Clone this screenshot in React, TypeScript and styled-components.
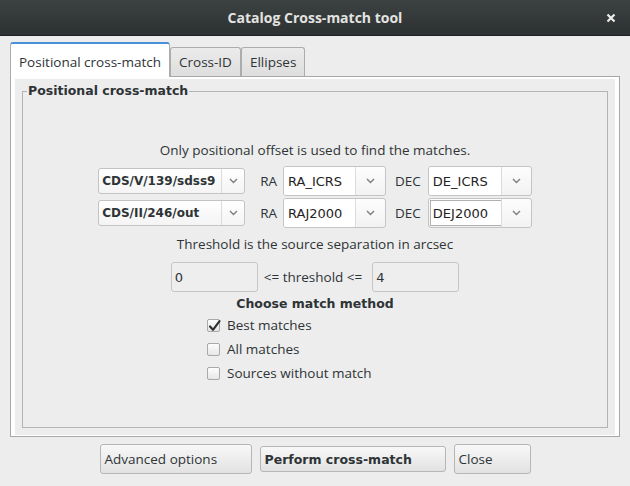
import React from "react";
import styled, { createGlobalStyle, css } from "styled-components";

const UI = `"Open Sans", "Noto Sans", sans-serif`;
const DJ = `"DejaVu Sans", "Liberation Sans", sans-serif`;

const GlobalStyle = createGlobalStyle`
  html, body { margin: 0; padding: 0; background: #ededed; }
  body { font-family: ${UI}; color: #2e3436; }
  *, *::before, *::after { box-sizing: border-box; }
`;

const Window = styled.div`
  width: 630px;
  height: 486px;
  display: flex;
  flex-direction: column;
  background: #ededed;
  overflow: hidden;
`;

const TitleBar = styled.header`
  height: 36px;
  flex: none;
  display: grid;
  grid-template-columns: 1fr auto 1fr;
  align-items: center;
  background: linear-gradient(#3c4141, #2d3131);
  border-bottom: 1px solid #1e2121;
`;

const Title = styled.div`
  grid-column: 2;
  font-family: ${UI};
  font-weight: 700;
  font-size: 14px;
  color: #e3e3e1;
  padding-bottom: 1px;
`;

const CloseIcon = styled.div`
  grid-column: 3;
  justify-self: end;
  margin-right: 14px;
  display: flex;
  align-items: center;
`;

const Body = styled.div`
  flex: 1;
  display: flex;
  flex-direction: column;
  padding: 6px 10px 0;
`;

const TabStrip = styled.div`
  height: 34px;
  display: flex;
  align-items: flex-end;
`;

const Tab = styled.div<{ $active?: boolean }>`
  display: flex;
  align-items: center;
  padding: 0 8px;
  font-family: ${UI};
  font-size: 13.5px;
  color: #2e3436;
  white-space: nowrap;
  border: 1px solid #acacac;
  border-bottom: none;
  border-radius: 3px 3px 0 0;
  ${(p) =>
    p.$active
      ? css`
          height: 35px;
          margin-bottom: -1px;
          padding-top: 3px;
          background: #ffffff;
          border-top: 2px solid #4a90d9;
          position: relative;
          z-index: 1;
        `
      : css`
          height: 29px;
          background: linear-gradient(#ebebeb, #dedede);
        `}
`;

const Panel = styled.div`
  height: 361px;
  flex: none;
  border: 1px solid #a8a8a8;
  background: #ffffff;
  padding: 2px 4px 1px;
  display: flex;
`;

const PanelInner = styled.div`
  flex: 1;
  display: flex;
  background: #ededed;
  padding: 4px 7px 7px 7px;
`;

const Group = styled.fieldset`
  flex: 1;
  margin: 0;
  padding: 0;
  min-width: 0;
  border: 1px solid #b4b4b4;
  display: flex;
  flex-direction: column;
  align-items: center;
`;

const Legend = styled.legend`
  font-family: ${DJ};
  font-weight: 700;
  font-size: 12.5px;
  line-height: 16px;
  color: #2e3436;
  margin-left: 4px;
  padding: 0 1px;
`;

const Caption = styled.div<{ $mt: number; $bold?: boolean }>`
  margin-top: ${(p) => p.$mt}px;
  line-height: 18px;
  font-family: ${(p) => (p.$bold ? DJ : UI)};
  font-weight: ${(p) => (p.$bold ? 700 : 400)};
  font-size: ${(p) => (p.$bold ? 12.5 : 13.5)}px;
  color: #2e3436;
  white-space: nowrap;
`;

const Row = styled.div<{ $mt: number }>`
  margin-top: ${(p) => p.$mt}px;
  height: 30px;
  display: flex;
  align-items: center;
`;

const FieldLabel = styled.span<{ $ml: number; $mr: number }>`
  margin: 0 ${(p) => p.$mr}px 0 ${(p) => p.$ml}px;
  font-family: ${UI};
  font-size: 13.5px;
  color: #2e3436;
  white-space: nowrap;
`;

const Combo = styled.div`
  width: 147px;
  height: 26px;
  display: flex;
  border: 1px solid #c4c4c4;
  border-radius: 3px;
  background: linear-gradient(#ffffff, #f4f4f4);
`;

const ComboText = styled.div`
  flex: 1;
  display: flex;
  align-items: center;
  padding-left: 3px;
  font-family: ${DJ};
  font-weight: 700;
  font-size: 12px;
  color: #2e3436;
  white-space: nowrap;
  overflow: hidden;
`;

const ArrowBox = styled.div<{ $w: number }>`
  width: ${(p) => p.$w}px;
  flex: none;
  display: flex;
  align-items: center;
  justify-content: center;
  border-left: 1px solid #dcdcdc;
`;

const EditCombo = styled.div<{ $w: number }>`
  width: ${(p) => p.$w}px;
  height: 30px;
  display: flex;
  border: 1px solid #c4c4c4;
  border-radius: 3px;
  background: linear-gradient(#fdfdfd, #f2f2f2);
  overflow: hidden;
`;

const EditField = styled.div<{ $focused?: boolean }>`
  flex: 1;
  display: flex;
  align-items: center;
  padding-left: 4px;
  background: #ffffff;
  font-family: ${DJ};
  font-size: 13px;
  color: #1f2324;
  white-space: nowrap;
  ${(p) =>
    p.$focused &&
    css`
      margin: 1px 0 1px 1px;
      padding-left: 2px;
      border: 1px solid #b0b0b0;
      border-right: none;
    `}
`;

const NumField = styled.div`
  width: 87px;
  height: 30px;
  display: flex;
  align-items: center;
  padding-left: 3px;
  border: 1px solid #c6c6c6;
  border-radius: 3px;
  background: #eeeeee;
  font-family: ${DJ};
  font-size: 13px;
  color: #2e3436;
`;

const CheckList = styled.div`
  align-self: flex-start;
  margin-left: 184px;
  display: flex;
  flex-direction: column;
`;

const CheckRow = styled.label`
  height: 24px;
  display: flex;
  align-items: center;
  gap: 7px;
  font-family: ${UI};
  font-size: 13.5px;
  color: #2e3436;
  white-space: nowrap;
`;

const CheckBox = styled.span`
  width: 13px;
  height: 13px;
  flex: none;
  display: grid;
  place-items: center;
  border: 1px solid #a9a9a9;
  border-radius: 2px;
  background: linear-gradient(#fdfdfd, #e6e6e6);
  overflow: visible;
`;

const ButtonBar = styled.div`
  margin-top: 7px;
  height: 30px;
  display: flex;
  justify-content: center;
  align-items: center;
  gap: 8px;
`;

const PushButton = styled.button<{ $w: number; $h: number; $bold?: boolean }>`
  width: ${(p) => p.$w}px;
  height: ${(p) => p.$h}px;
  padding: 0 0 0 4px;
  text-align: left;
  border: 1px solid #b6b6b6;
  border-radius: 3px;
  background: linear-gradient(#f8f8f8, #e2e2e2);
  color: #2e3436;
  font-family: ${(p) => (p.$bold ? DJ : UI)};
  font-weight: ${(p) => (p.$bold ? 700 : 400)};
  font-size: ${(p) => (p.$bold ? 12.5 : 13.5)}px;
  white-space: nowrap;
`;

const Chevron = () => (
  <svg width="9" height="6" viewBox="0 0 9 6">
    <path d="M1 1 L4.5 4.5 L8 1" fill="none" stroke="#7d7d7d" strokeWidth="1.4" />
  </svg>
);

const CheckMark = () => (
  <svg width="13" height="13" viewBox="0 0 13 13" style={{ overflow: "visible" }}>
    <path
      d="M2 6.5 L5 9.8 L11.5 1.2"
      fill="none"
      stroke="#2e3436"
      strokeWidth="2.2"
      strokeLinecap="round"
      strokeLinejoin="round"
    />
  </svg>
);

const CatalogCombo = ({ value }: { value: string }) => (
  <Combo>
    <ComboText>{value}</ComboText>
    <ArrowBox $w={23}>
      <Chevron />
    </ArrowBox>
  </Combo>
);

const ColumnCombo = ({ value, w, focused }: { value: string; w: number; focused?: boolean }) => (
  <EditCombo $w={w}>
    <EditField $focused={focused}>{value}</EditField>
    <ArrowBox $w={30}>
      <Chevron />
    </ArrowBox>
  </EditCombo>
);

const Check = ({ label, checked }: { label: string; checked?: boolean }) => (
  <CheckRow>
    <CheckBox>{checked && <CheckMark />}</CheckBox>
    {label}
  </CheckRow>
);

export default function App() {
  return (
    <>
      <GlobalStyle />
      <Window>
        <TitleBar>
          <Title>Catalog Cross-match tool</Title>
          <CloseIcon>
            <svg width="10" height="10" viewBox="0 0 10 10">
              <path d="M1.5 1.5 L8.5 8.5 M8.5 1.5 L1.5 8.5" stroke="#eeeeec" strokeWidth="2.2" />
            </svg>
          </CloseIcon>
        </TitleBar>
        <Body>
          <TabStrip>
            <Tab $active>Positional cross-match</Tab>
            <Tab>Cross-ID</Tab>
            <Tab>Ellipses</Tab>
          </TabStrip>
          <Panel>
            <PanelInner>
              <Group>
                <Legend>Positional cross-match</Legend>
                <Caption $mt={42}>Only positional offset is used to find the matches.</Caption>
                <Row $mt={7}>
                  <CatalogCombo value="CDS/V/139/sdss9" />
                  <FieldLabel $ml={15} $mr={6}>RA</FieldLabel>
                  <ColumnCombo value="RA_ICRS" w={103} />
                  <FieldLabel $ml={9} $mr={7}>DEC</FieldLabel>
                  <ColumnCombo value="DE_ICRS" w={104} />
                </Row>
                <Row $mt={2}>
                  <CatalogCombo value="CDS/II/246/out" />
                  <FieldLabel $ml={15} $mr={6}>RA</FieldLabel>
                  <ColumnCombo value="RAJ2000" w={103} />
                  <FieldLabel $ml={9} $mr={7}>DEC</FieldLabel>
                  <ColumnCombo value="DEJ2000" w={104} focused />
                </Row>
                <Caption $mt={7}>Threshold is the source separation in arcsec</Caption>
                <Row $mt={9}>
                  <NumField>0</NumField>
                  <FieldLabel $ml={6} $mr={10}>&lt;= threshold &lt;=</FieldLabel>
                  <NumField>4</NumField>
                </Row>
                <Caption $mt={3} $bold>
                  Choose match method
                </Caption>
                <CheckList>
                  <Check label="Best matches" checked />
                  <Check label="All matches" />
                  <Check label="Sources without match" />
                </CheckList>
              </Group>
            </PanelInner>
          </Panel>
          <ButtonBar>
            <PushButton $w={152} $h={30}>Advanced options</PushButton>
            <PushButton $w={186} $h={26} $bold>
              Perform cross-match
            </PushButton>
            <PushButton $w={77} $h={30}>Close</PushButton>
          </ButtonBar>
        </Body>
      </Window>
    </>
  );
}
